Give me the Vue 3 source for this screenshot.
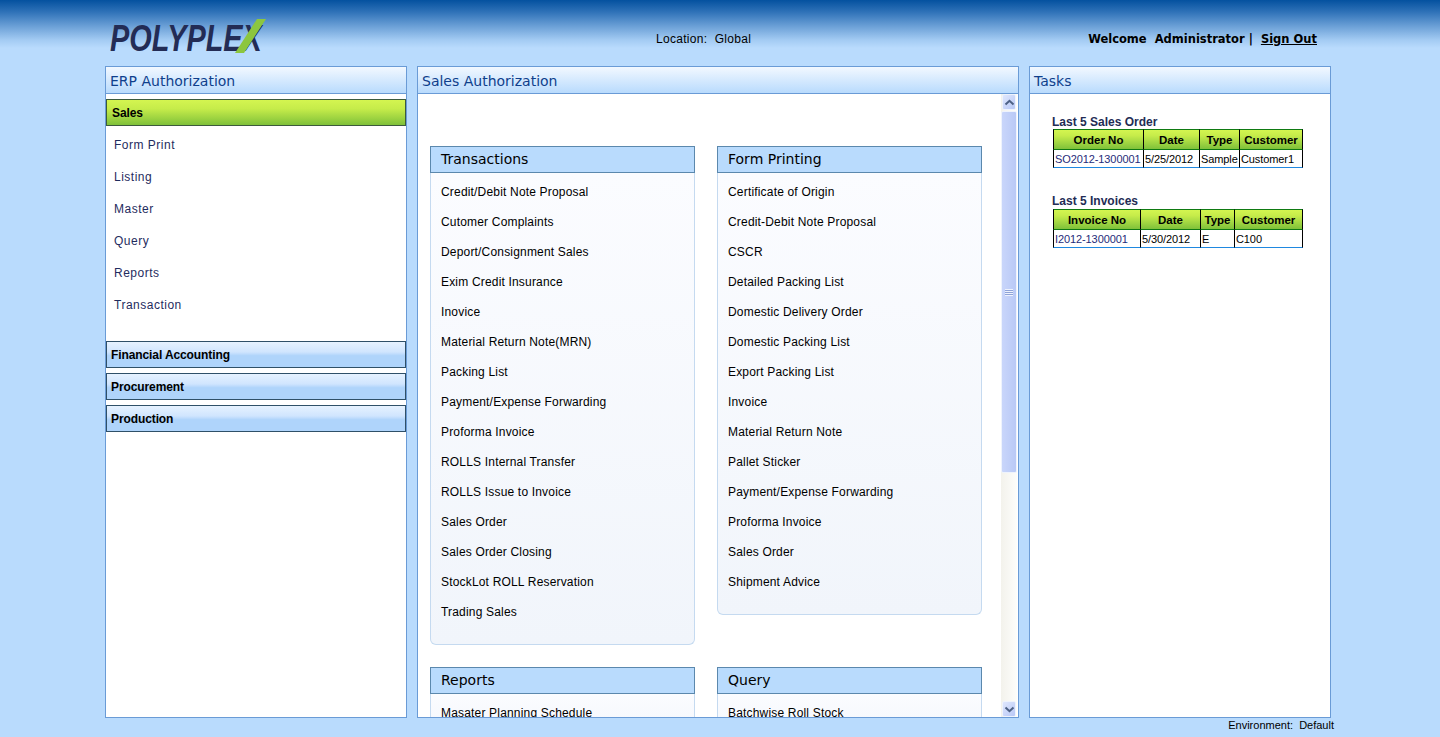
<script setup>
const menu = ["Form Print", "Listing", "Master", "Query", "Reports", "Transaction"];
const modules = ["Financial Accounting", "Procurement", "Production"];

const sections = [
    {
        title: "Transactions",
        links: [
            "Credit/Debit Note Proposal",
            "Cutomer Complaints",
            "Deport/Consignment Sales",
            "Exim Credit Insurance",
            "Inovice",
            "Material Return Note(MRN)",
            "Packing List",
            "Payment/Expense Forwarding",
            "Proforma Invoice",
            "ROLLS Internal Transfer",
            "ROLLS Issue to Invoice",
            "Sales Order",
            "Sales Order Closing",
            "StockLot ROLL Reservation",
            "Trading Sales",
        ],
    },
    {
        title: "Form Printing",
        links: [
            "Certificate of Origin",
            "Credit-Debit Note Proposal",
            "CSCR",
            "Detailed Packing List",
            "Domestic Delivery Order",
            "Domestic Packing List",
            "Export Packing List",
            "Invoice",
            "Material Return Note",
            "Pallet Sticker",
            "Payment/Expense Forwarding",
            "Proforma Invoice",
            "Sales Order",
            "Shipment Advice",
        ],
    },
    { title: "Reports", links: ["Masater Planning Schedule"] },
    { title: "Query", links: ["Batchwise Roll Stock"] },
];
</script>

<template>
    <div class="page">
        <header class="top">
            <div class="logo">
                <span class="logo_text">POLYPLEX</span>
                <svg class="logo_slash" width="36" height="36" viewBox="0 0 36 36">
                    <path d="M0 35 L9 35 L31 1 L22 1 Z" fill="#8cc63f" />
                </svg>
            </div>
            <div class="location">Location:&nbsp; Global</div>
            <div class="welcome">
                Welcome&nbsp; Administrator&nbsp;|&nbsp; <a class="sign_out">Sign Out</a>
            </div>
        </header>

        <main class="panels">
            <section class="panel panel_side">
                <h2 class="panel_head">ERP Authorization</h2>
                <div class="panel_body accordion">
                    <div class="acc_active">Sales</div>
                    <ul class="acc_menu">
                        <li v-for="item in menu" :key="item">{{ item }}</li>
                    </ul>
                    <div v-for="mod in modules" :key="mod" class="acc_item">{{ mod }}</div>
                </div>
            </section>

            <section class="panel panel_main">
                <h2 class="panel_head">Sales Authorization</h2>
                <div class="panel_body scroll_area">
                    <div class="sections">
                        <div v-for="sec in sections" :key="sec.title" class="box">
                            <h3 class="box_head">{{ sec.title }}</h3>
                            <ul class="box_list">
                                <li v-for="link in sec.links" :key="link">{{ link }}</li>
                            </ul>
                        </div>
                    </div>
                    <div class="scrollbar">
                        <div class="sb_btn">
                            <svg width="11" height="7" viewBox="0 0 11 7">
                                <path d="M1.5 5.5 L5.5 1.8 L9.5 5.5" fill="none" stroke="#4d6185" stroke-width="2" />
                            </svg>
                        </div>
                        <div class="sb_track">
                            <div class="sb_thumb">
                                <span class="sb_grip"></span>
                            </div>
                        </div>
                        <div class="sb_btn">
                            <svg width="11" height="7" viewBox="0 0 11 7">
                                <path d="M1.5 1.5 L5.5 5.2 L9.5 1.5" fill="none" stroke="#4d6185" stroke-width="2" />
                            </svg>
                        </div>
                    </div>
                </div>
            </section>

            <section class="panel panel_side">
                <h2 class="panel_head">Tasks</h2>
                <div class="panel_body tasks">
                    <h4 class="task_title">Last 5 Sales Order</h4>
                    <table class="grid grid_orders">
                        <thead>
                            <tr>
                                <th>Order No</th>
                                <th>Date</th>
                                <th>Type</th>
                                <th>Customer</th>
                            </tr>
                        </thead>
                        <tbody>
                            <tr>
                                <td class="doc_no">SO2012-1300001</td>
                                <td>5/25/2012</td>
                                <td>Sample</td>
                                <td>Customer1</td>
                            </tr>
                        </tbody>
                    </table>
                    <h4 class="task_title second">Last 5 Invoices</h4>
                    <table class="grid grid_invoices">
                        <thead>
                            <tr>
                                <th>Invoice No</th>
                                <th>Date</th>
                                <th>Type</th>
                                <th>Customer</th>
                            </tr>
                        </thead>
                        <tbody>
                            <tr>
                                <td class="doc_no">I2012-1300001</td>
                                <td>5/30/2012</td>
                                <td>E</td>
                                <td>C100</td>
                            </tr>
                        </tbody>
                    </table>
                </div>
            </section>
        </main>

        <footer class="env">Environment:&nbsp; Default</footer>
    </div>
</template>

<style>
html,
body {
    margin: 0;
    height: 100%;
    overflow: hidden;
    background: #b9dbfd;
}
</style>

<style scoped>
.page {
    width: 1440px;
    height: 737px;
    background: #b9dbfd;
    font-family: "Liberation Sans", Arial, sans-serif;
    overflow: hidden;
}

.top {
    height: 66px;
    padding: 0 123px 0 105px;
    box-sizing: border-box;
    display: flex;
    align-items: flex-start;
    background: linear-gradient(#04519f 0, #2f72b8 12px, #6a9fd6 26px, #a3cbf3 40px, #b9dbfd 48px);
    color: #000;
}

.logo {
    position: relative;
    width: 165px;
    height: 36px;
    margin-top: 18px;
    margin-left: 5px;
}

.logo_text {
    position: absolute;
    left: 0;
    top: 3px;
    font-family: "Liberation Sans", Arial, sans-serif;
    font-size: 37px;
    line-height: 36px;
    font-weight: 700;
    font-style: italic;
    color: #232c55;
    white-space: nowrap;
    transform: scaleX(0.78);
    transform-origin: left top;
}

.logo_slash {
    position: absolute;
    left: 125px;
    top: 0;
}

.location {
    margin-left: 381px;
    margin-top: 32px;
    width: 300px;
    font-size: 12px;
    line-height: 15px;
    letter-spacing: 0.3px;
}

.welcome {
    margin-left: auto;
    margin-top: 32px;
    font-family: "DejaVu Sans", Verdana, sans-serif;
    font-size: 11.5px;
    line-height: 15px;
    font-weight: 700;
    white-space: nowrap;
}

.sign_out {
    text-decoration: underline;
}

.panels {
    display: flex;
    gap: 10px;
    padding-left: 105px;
}

.panel {
    height: 652px;
    box-sizing: border-box;
    border: 1px solid #6a9bd6;
    background: #fff;
    display: flex;
    flex-direction: column;
}

.panel_side {
    width: 302px;
}

.panel_main {
    width: 602px;
}

.panel_head {
    margin: 0;
    height: 27px;
    flex: none;
    box-sizing: border-box;
    padding-left: 4px;
    border-bottom: 1px solid #6a9bd6;
    background: linear-gradient(#f2f8ff, #b9dbfd);
    font-family: "DejaVu Sans", Verdana, sans-serif;
    font-size: 14px;
    line-height: 28px;
    font-weight: 400;
    color: #0f3f8c;
}

.panel_body {
    flex: 1;
    min-height: 0;
}

.accordion {
    padding-top: 5px;
}

.acc_active,
.acc_item {
    height: 27px;
    box-sizing: border-box;
    margin: 0 0 5px;
    padding-left: 4px;
    font-size: 12px;
    line-height: 26px;
    font-weight: 700;
    letter-spacing: -0.1px;
    color: #000;
    border: 1px solid #2f5068;
}

.acc_active {
    margin-bottom: 0;
    padding-left: 5px;
    border-color: #3c5a3c;
    background: linear-gradient(#d4f550 0, #c6ec4a 35%, #7fc13a 100%);
}

.acc_item {
    background: linear-gradient(#e6f2ff 0, #d0e5fe 40%, #afd4fb 55%, #afd4fb 100%);
}

.acc_menu {
    list-style: none;
    margin: 0;
    padding: 3px 0 20px 8px;
}

.acc_menu li {
    height: 32px;
    font-size: 12px;
    line-height: 32px;
    letter-spacing: 0.5px;
    color: #1f2c5e;
}

.scroll_area {
    display: flex;
    overflow: hidden;
}

.sections {
    flex: 1;
    min-width: 0;
    padding: 52px 0 0 12px;
    display: grid;
    grid-template-columns: 265px 265px;
    column-gap: 22px;
    row-gap: 22px;
    align-items: start;
    align-content: start;
}

.box_head {
    margin: 0;
    height: 27px;
    box-sizing: border-box;
    border: 1px solid #5b88ad;
    background: #b9dbfd;
    padding-left: 10px;
    font-family: "DejaVu Sans", Verdana, sans-serif;
    font-size: 14px;
    line-height: 25px;
    font-weight: 400;
    color: #000;
}

.box_list {
    list-style: none;
    margin: 0;
    padding: 4px 0 17px 10px;
    border: 1px solid #c5daf0;
    border-top: 0;
    border-radius: 0 0 6px 6px;
    background: linear-gradient(#fbfcff, #f1f5fb);
}

.box_list li {
    height: 30px;
    font-size: 12px;
    line-height: 30px;
    letter-spacing: 0.18px;
    color: #000;
}

.scrollbar {
    width: 16px;
    flex: none;
    margin-right: 1px;
    display: flex;
    flex-direction: column;
    background: linear-gradient(90deg, #f3f2ec, #fdfdfb);
}

.sb_btn {
    height: 16px;
    flex: none;
    margin: 0 1px;
    box-sizing: border-box;
    border: 1px solid #eef3fd;
    border-radius: 2px;
    background: linear-gradient(135deg, #dfe7fd, #b8c8f6);
    display: flex;
    align-items: center;
    justify-content: center;
}

.sb_track {
    flex: 1;
    min-height: 0;
}

.sb_thumb {
    height: 362px;
    margin: 1px 0 0;
    box-sizing: border-box;
    border: 1px solid #eef3fd;
    border-radius: 2px;
    background: linear-gradient(90deg, #c9d6fb, #b9c9f6);
    display: flex;
    align-items: center;
    justify-content: center;
}

.sb_grip {
    width: 8px;
    height: 7px;
    background: repeating-linear-gradient(#eef2fd 0 1px, #8ea3d8 1px 2px);
}

.tasks {
    padding: 21px 0 0 22px;
}

.task_title {
    margin: 0;
    height: 14px;
    font-size: 12px;
    line-height: 15px;
    font-weight: 700;
    color: #232c55;
}

.task_title.second {
    margin-top: 27px;
    line-height: 13px;
}

.grid {
    margin-left: 1px;
    width: 250px;
    table-layout: fixed;
    border-collapse: separate;
    border-spacing: 0;
    font-size: 11px;
    color: #000;
}

.grid th,
.grid td {
    box-sizing: border-box;
    border-right: 1px solid #000;
    padding: 0 1px;
    white-space: nowrap;
    overflow: hidden;
}

.grid th:first-child,
.grid td:first-child {
    border-left: 1px solid #000;
}

.grid th {
    height: 21px;
    font-size: 11.5px;
    font-weight: 700;
    text-align: center;
    border-top: 1px solid #0f7a12;
    border-bottom: 1px solid #0f7a12;
    background: linear-gradient(#d4f550 0, #c6ec4a 30%, #7fc13a 100%);
}

.grid td {
    height: 18px;
    text-align: left;
    border-bottom: 1px solid #1f88e0;
    letter-spacing: -0.1px;
}

.doc_no {
    color: #1f2c7a;
}

.grid_orders th:nth-child(1) {
    width: 91px;
}

.grid_orders th:nth-child(2) {
    width: 56px;
}

.grid_orders th:nth-child(3) {
    width: 40px;
}

.grid_invoices th:nth-child(1) {
    width: 88px;
}

.grid_invoices th:nth-child(2) {
    width: 60px;
}

.grid_invoices th:nth-child(3) {
    width: 34px;
}

.env {
    padding-right: 106px;
    text-align: right;
    font-size: 11px;
    line-height: 14px;
    color: #000;
}
</style>
